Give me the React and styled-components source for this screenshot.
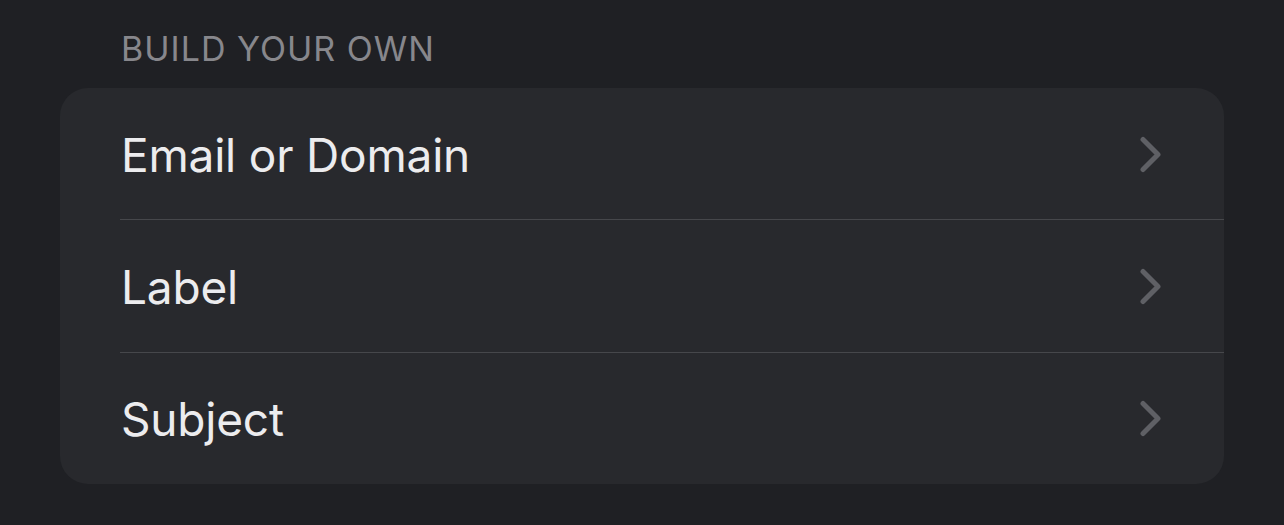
import React from "react";
import styled, { createGlobalStyle } from "styled-components";

const Global = createGlobalStyle`
  html, body { margin: 0; padding: 0; background: #1f2024; }
  body { font-family: Inter, "Noto Sans", sans-serif; -webkit-font-smoothing: antialiased; }
`;

const Page = styled.div`
  width: 1284px;
  height: 525px;
  box-sizing: border-box;
  padding: 0 60px;
  background: #1f2024;
`;

const SectionHeader = styled.div`
  height: 88px;
  box-sizing: border-box;
  padding: 27px 0 0 61px;
  font-size: 34px;
  line-height: 44px;
  letter-spacing: 1px;
  color: #87878c;
  text-transform: uppercase;
`;

const Card = styled.div`
  background: #28292d;
  border-radius: 28px;
  overflow: hidden;
`;

const Row = styled.div`
  display: flex;
  align-items: center;
  justify-content: space-between;
  height: 131.33px;
  padding: 2px 61px 0 61px;
  box-sizing: border-box;
`;

const Label = styled.span`
  font-size: 46px;
  color: #ececee;
  letter-spacing: -0.2px;
`;

const Divider = styled.div`
  height: 1px;
  background: #46474b;
  margin-left: 60px;
`;

const Chevron = () => (
  <svg width="24" height="38" viewBox="0 0 24 38">
    <path d="M4 3.5 L19 18.5 L4 33.5" fill="none" stroke="#5f6065" strokeWidth="5" strokeLinecap="round" strokeLinejoin="round" />
  </svg>
);

const items = ["Email or Domain", "Label", "Subject"];

export default function App() {
  return (
    <Page>
      <Global />
      <SectionHeader>Build your own</SectionHeader>
      <Card>
        {items.map((t, i) => (
          <React.Fragment key={t}>
            {i > 0 && <Divider />}
            <Row>
              <Label>{t}</Label>
              <Chevron />
            </Row>
          </React.Fragment>
        ))}
      </Card>
    </Page>
  );
}
